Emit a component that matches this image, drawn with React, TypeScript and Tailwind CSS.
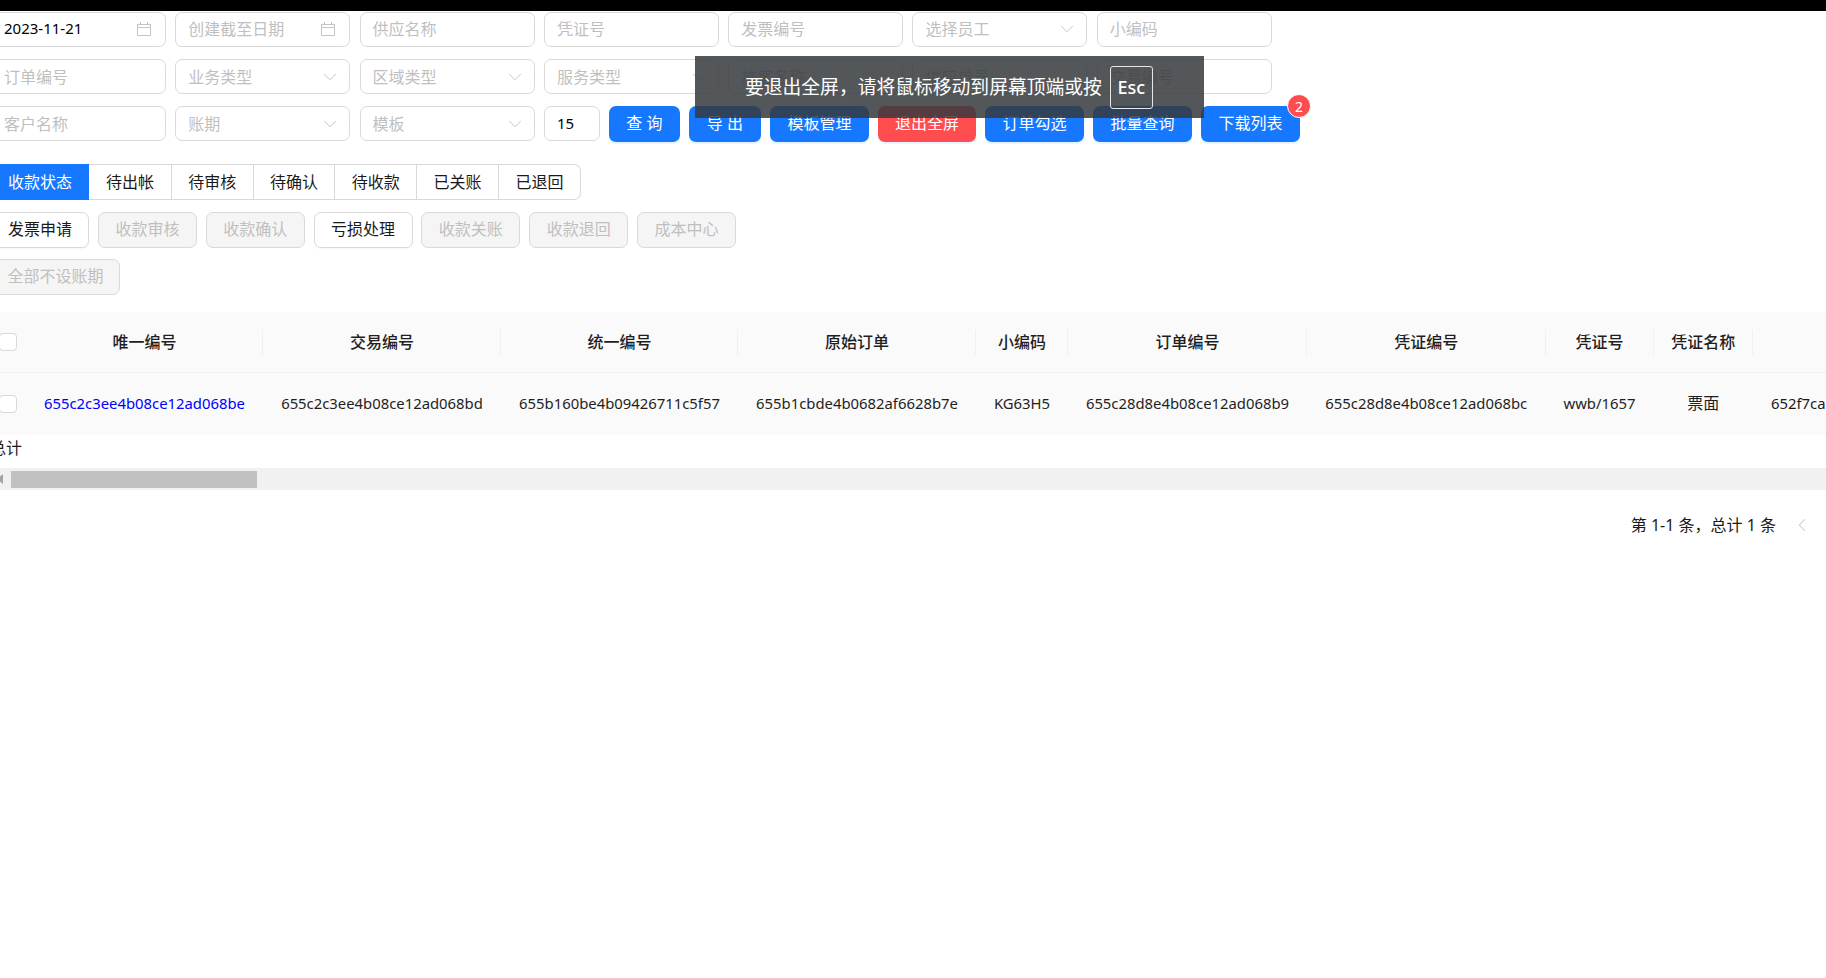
import { ChevronDown, ChevronLeft } from "lucide-react";

const FONT = "font-['Noto_Sans','Noto_Sans_CJK_SC',sans-serif]";

function CalendarIcon() {
  return (
    <svg width="14" height="14" viewBox="0 0 14 14" fill="none" stroke="#c4c4c4" strokeWidth="1" className="shrink-0">
      <path d="M0.5 2.5H13.5V13.5H0.5Z" />
      <path d="M0.5 5.5H13.5" />
      <path d="M3.5 0V3.5M10.5 0V3.5" />
    </svg>
  );
}

function Field({ text, value, icon, className = "w-[175px]" }: { text?: string; value?: string; icon?: "date" | "select"; className?: string }) {
  return (
    <div className={`flex h-[35px] shrink-0 items-center justify-between rounded-[7px] border border-[#d9d9d9] bg-white px-[12px] text-[16px] ${className}`}>
      {value ? (
        <span className="pb-[1px] text-[15px] text-black">{value}</span>
      ) : (
        <span className="text-[#bfbfbf]">{text}</span>
      )}
      {icon === "date" && <span className="mr-[2px] flex"><CalendarIcon /></span>}
      {icon === "select" && <ChevronDown size={22} strokeWidth={1} className="-mr-[4px] shrink-0 text-[#bfbfbf]" />}
    </div>
  );
}

function PrimaryButton({ label, className, danger }: { label: string; className: string; danger?: boolean }) {
  return (
    <button className={`relative h-[36px] shrink-0 rounded-[7px] pb-[2px] text-[16px] text-white shadow-[0_2px_0_rgba(5,145,255,0.1)] ${danger ? "bg-[#ff4d4f]" : "bg-[#1677ff]"} ${className}`}>
      {label}
    </button>
  );
}

function ActionButton({ label, disabled, className = "w-[99px]" }: { label: string; disabled?: boolean; className?: string }) {
  return (
    <button
      className={`h-[36px] shrink-0 rounded-[7px] border border-[#d9d9d9] pb-[2px] text-[16px] ${
        disabled ? "bg-[#f5f5f5] text-[#bfbfbf]" : "bg-white text-[#1a1a1a] shadow-[0_2px_0_rgba(0,0,0,0.02)]"
      } ${className}`}
    >
      {label}
    </button>
  );
}

const columns = [
  { w: "w-[237px]", head: "唯一编号", cell: "655c2c3ee4b08ce12ad068be", link: true },
  { w: "w-[238px]", head: "交易编号", cell: "655c2c3ee4b08ce12ad068bd" },
  { w: "w-[237px]", head: "统一编号", cell: "655b160be4b09426711c5f57" },
  { w: "w-[238px]", head: "原始订单", cell: "655b1cbde4b0682af6628b7e" },
  { w: "w-[92px]", head: "小编码", cell: "KG63H5" },
  { w: "w-[239px]", head: "订单编号", cell: "655c28d8e4b08ce12ad068b9" },
  { w: "w-[238.5px]", head: "凭证编号", cell: "655c28d8e4b08ce12ad068bc" },
  { w: "w-[108px]", head: "凭证号", cell: "wwb/1657" },
  { w: "w-[99.5px]", head: "凭证名称", cell: "票面", cjk: true },
];

const tabs = ["待出帐", "待审核", "待确认", "待收款", "已关账", "已退回"];

export default function App() {
  return (
    <div className={`relative h-[978px] w-[1826px] overflow-hidden bg-white text-[#1a1a1a] ${FONT}`}>
      <div className="h-[11px] bg-black" />

      <div className="-ml-[9px] pt-[0.5px]">
        <div className="flex gap-[9.3px]">
          <Field value="2023-11-21" icon="date" />
          <Field text="创建截至日期" icon="date" />
          <Field text="供应名称" />
          <Field text="凭证号" />
          <Field text="发票编号" />
          <Field text="选择员工" icon="select" />
          <Field text="小编码" />
        </div>
        <div className="mt-[12.5px] flex gap-[9.3px]">
          <Field text="订单编号" />
          <Field text="业务类型" icon="select" />
          <Field text="区域类型" icon="select" />
          <Field text="服务类型" icon="select" />
          <Field text="旅客名称" />
          <Field text="供应单号" />
          <Field text="交易编号" />
        </div>
        <div className="mt-[12px] flex gap-[9.3px]">
          <Field text="客户名称" />
          <Field text="账期" icon="select" />
          <Field text="模板" icon="select" />
          <div className="flex gap-[9px]">
            <Field value="15" className="w-[56px]" />
            <PrimaryButton label="查 询" className="w-[71px]" />
            <PrimaryButton label="导 出" className="w-[72px]" />
            <PrimaryButton label="模板管理" className="w-[99px]" />
            <PrimaryButton label="退出全屏" danger className="w-[98px]" />
            <PrimaryButton label="订单勾选" className="w-[99px]" />
            <PrimaryButton label="批量查询" className="w-[99px]" />
            <div className="relative shrink-0">
              <PrimaryButton label="下载列表" className="w-[99px]" />
              <span className="absolute -right-[11px] -top-[12px] flex h-[24px] w-[24px] items-center justify-center rounded-full border-[1.5px] border-white bg-[#ff4d4f] text-[14px] text-white">2</span>
            </div>
          </div>
        </div>

        <div className="mt-[22px] flex">
          <div className="flex h-[36px] w-[98px] items-center justify-center bg-[#1677ff] text-[16px] text-white">收款状态</div>
          <div className="flex h-[36px] rounded-r-[7px] border border-l-0 border-[#d9d9d9]">
            {tabs.map((t, i) => (
              <div key={t} className={`flex w-[81.8px] items-center justify-center text-[16px] ${i > 0 ? "border-l border-[#d9d9d9]" : ""}`}>
                {t}
              </div>
            ))}
          </div>
        </div>

        <div className="mt-[12px] flex gap-[8.8px]">
          <ActionButton label="发票申请" className="w-[98.2px]" />
          <ActionButton label="收款审核" disabled />
          <ActionButton label="收款确认" disabled />
          <ActionButton label="亏损处理" />
          <ActionButton label="收款关账" disabled />
          <ActionButton label="收款退回" disabled />
          <ActionButton label="成本中心" disabled />
        </div>
        <div className="mt-[11px]">
          <ActionButton label="全部不设账期" disabled className="w-[129px]" />
        </div>

        <div className="mt-[17px] flex h-[61px] w-[1900px] items-center border-b border-[#f0f0f0] bg-[#fafafa]">
          <div className="flex w-[35px] shrink-0 items-center">
            <span className="ml-[8px] h-[18px] w-[18px] rounded-[4px] border border-[#d9d9d9] bg-white" />
          </div>
          {columns.map((c) => (
            <div key={c.head} className={`flex h-[25px] shrink-0 items-center justify-center border-r border-[#f0f0f0] pl-[1px] text-[16px] font-medium text-[#1f1f1f] ${c.w}`}>
              {c.head}
            </div>
          ))}
        </div>
        <div className="flex h-[62px] w-[1900px] items-center bg-[#fafafa] pb-[1px]">
          <div className="flex w-[35px] shrink-0 items-center">
            <span className="ml-[8px] h-[18px] w-[18px] rounded-[4px] border border-[#d9d9d9] bg-white" />
          </div>
          {columns.map((c) => (
            <div key={c.head} className={`flex shrink-0 items-center justify-center whitespace-nowrap pb-[1px] ${c.cjk ? "text-[16px]" : "text-[14.85px]"} ${c.link ? "text-[#0000ff]" : "text-[#1f1f1f]"} ${c.w}`}>
              {c.cell}
            </div>
          ))}
          <div className="pb-[1px] pl-[18px] text-[14.85px]">652f7ca</div>
        </div>

        <div className="-ml-[1px] h-[33px] pt-[1px] text-[16px] leading-[24px]">总计</div>

        <div className="flex h-[22px] w-[1900px] items-center bg-[#f1f1f1]">
          <span className="ml-[6px] h-0 w-0 border-y-[5px] border-r-[6px] border-y-transparent border-r-[#a3a3a3]" />
          <span className="ml-[8px] h-[17px] w-[246px] bg-[#c1c1c1]" />
        </div>
      </div>

      <div className="flex h-[70px] items-center justify-end pr-[13px] text-[16px]">
        <span>第 1-1 条，总计 1 条</span>
        <ChevronLeft size={22} strokeWidth={1.1} className="ml-[15px] text-[#c8c8c8]" />
      </div>

      <div className="absolute left-[695px] top-[56px] flex h-[62px] w-[509px] items-center bg-[#36393d]/85 pl-[50px] text-[18.8px] text-white">
        <span>要退出全屏，请将鼠标移动到屏幕顶端或按</span>
        <span className="ml-[8px] flex h-[43px] w-[43px] items-center justify-center rounded-[3px] border border-[#e6e6e6] text-[18px] font-medium">Esc</span>
      </div>
    </div>
  );
}
